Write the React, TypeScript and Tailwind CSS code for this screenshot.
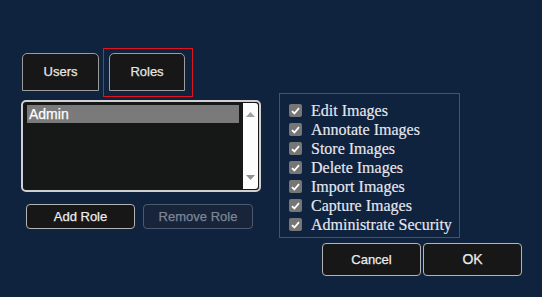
import React from "react";

const perms = [
  "Edit Images",
  "Annotate Images",
  "Store Images",
  "Delete Images",
  "Import Images",
  "Capture Images",
  "Administrate Security",
];

function Check() {
  return (
    <div className="w-[13px] h-[13px] rounded-[2px] bg-[#767676] flex items-center justify-center shrink-0">
      <svg width="9" height="8" viewBox="0 0 9 8">
        <path d="M1 4.2 L3.4 6.5 L8 1.2" fill="none" stroke="#ffffff" strokeWidth="1.8" />
      </svg>
    </div>
  );
}

export default function App() {
  const sans = { fontFamily: '"Liberation Sans", Arial, sans-serif' };
  return (
    <div className="w-[542px] h-[297px] bg-[#10233e] flex items-start pl-[21px] overflow-hidden [-webkit-text-stroke:0.25px]" style={sans}>
      {/* left column: tabs, role list, add/remove */}
      <div className="w-[240px] flex flex-col pt-[48px]">
        <div className="flex items-start">
          <button className="ml-[1px] mt-[5px] w-[77px] h-[38px] bg-[#171717] border border-[#9c9c9c] rounded-t-[5px] text-[13px] text-[#e6e6e6]">
            Users
          </button>
          <div className="ml-[4px] h-[49px] border border-[#e0141e] pt-[4px] pl-[5px] pr-[7px]">
            <button className="w-[76px] h-[38px] bg-[#171717] border border-[#9c9c9c] rounded-t-[5px] text-[13px] text-[#e6e6e6]">
              Roles
            </button>
          </div>
        </div>

        <div className="mt-[3px] h-[92px] border-2 border-[#d0d0d0] rounded-[5px] bg-[#161717] flex">
          <div className="flex-1 pt-[3px] pl-[4px] pr-[4px]">
            <div className="h-[18px] bg-[#7a7a7a] text-white text-[14px] leading-[18px] pl-[2px]">Admin</div>
          </div>
          <div className="w-[15px] mr-[1px] my-[1px] bg-[#fcfcfc] flex flex-col items-center justify-between py-[9px] rounded-r-[3px]">
            <svg width="9" height="5" viewBox="0 0 9 5">
              <path d="M4.5 0 L9 5 L0 5 Z" fill="#a0a0a0" />
            </svg>
            <svg width="9" height="5" viewBox="0 0 9 5">
              <path d="M0 0 L9 0 L4.5 5 Z" fill="#909090" />
            </svg>
          </div>
        </div>

        <div className="mt-[12px] ml-[5px] flex gap-[8px]">
          <button className="w-[109px] h-[25px] bg-[#171717] border border-[#b4b4b4] rounded-[4px] text-[13px] text-[#ececec]">
            Add Role
          </button>
          <button className="w-[110px] h-[25px] bg-[#17243a] border border-[#4d5a6e] rounded-[4px] text-[13px] text-[#7c8697]">
            Remove Role
          </button>
        </div>
      </div>

      {/* right column: permissions and dialog buttons */}
      <div className="ml-[18px] mt-[93px] flex flex-col">
        <div className="w-[181px] border border-[#e0141e] pt-[7px] pb-[3px] pl-[9px]">
          {perms.map((p) => (
            <div key={p} className="h-[19px] flex items-center gap-[9px]">
              <Check />
              <span
                className="text-[16px] leading-[19px] text-[#e8e8f0] whitespace-nowrap [-webkit-text-stroke:0.15px]"
                style={{ fontFamily: '"Liberation Serif", "Times New Roman", serif' }}
              >
                {p}
              </span>
            </div>
          ))}
        </div>
        <div className="ml-[43px] mt-[5px] flex gap-[2px]">
          <button className="w-[99px] h-[33px] bg-[#171717] border border-[#b4b4b4] rounded-[4px] text-[13px] text-[#ececec]">
            Cancel
          </button>
          <button className="w-[99px] h-[33px] bg-[#171717] border border-[#b4b4b4] rounded-[4px] text-[14px] text-[#ececec]">
            OK
          </button>
        </div>
      </div>
    </div>
  );
}
